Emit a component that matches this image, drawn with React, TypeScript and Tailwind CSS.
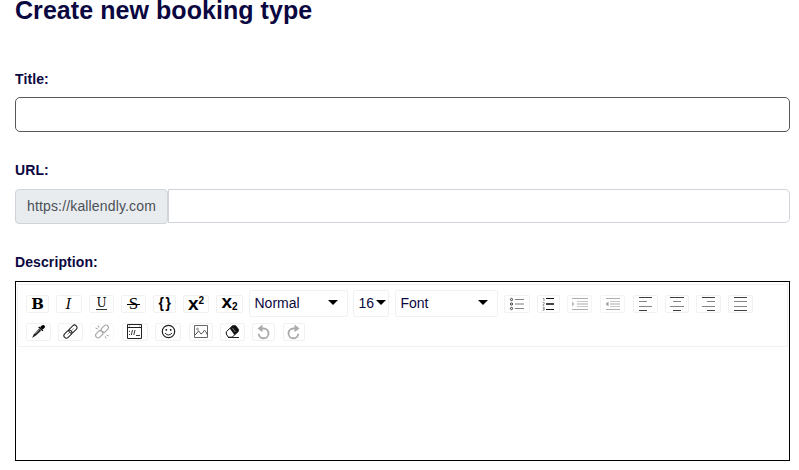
import type { ReactNode } from "react";

type ToolProps = { className: string; w: number; children: ReactNode };

/* Toolbar button; its drawing uses pixel units measured from the outer corner. */
function Tool({ className, w, children }: ToolProps) {
  return (
    <button className={`h-[18px] shrink-0 rounded-[2px] border border-[#f1f1f1] bg-white ${className}`}>
      <svg
        width={w}
        height={18}
        viewBox={`0 0 ${w} 18`}
        className="-m-px block max-w-none overflow-visible"
        fill="none"
        stroke="none"
      >
        {children}
      </svg>
    </button>
  );
}

function Glyph({ className, children }: { className: string; children: ReactNode }) {
  return (
    <button
      className={`flex h-[18px] shrink-0 items-center justify-center rounded-[2px] border border-[#f1f1f1] bg-white leading-none text-black ${className}`}
    >
      {children}
    </button>
  );
}

function Select({ className, label, caret }: { className: string; label: string; caret: string }) {
  return (
    <button
      className={`flex h-[27px] shrink-0 items-center justify-between rounded-[2px] border border-[#f1f1f1] bg-white pl-[5px] text-[14px] leading-[20px] text-[#0b0740] ${className}`}
    >
      <span className="-ml-[0.5px] -mt-px">{label}</span>
      <span className={`-mt-[3px] h-0 w-0 border-x-[5px] border-t-[5px] border-x-transparent border-t-black ${caret}`} />
    </button>
  );
}

type Bar = [x: number, y: number, w: number, h: number, fill: string];

function Bars({ bars }: { bars: Bar[] }) {
  return (
    <g shapeRendering="crispEdges">
      {bars.map(([x, y, w, h, fill], i) => (
        <rect key={i} x={x} y={y} width={w} height={h} fill={fill} />
      ))}
    </g>
  );
}

const dark = "#3f3f3f";
const mid = "#858585";

function Toolbar() {
  return (
    <div className="mx-px mt-[2px] h-[63px] border border-[#f1f1f1] pl-[8px] pt-[5px]">
      <div className="flex h-[27px] items-center">
        <Glyph className="w-[23px] pt-px font-['DejaVu_Serif'] text-[15px] font-bold">B</Glyph>
        <Glyph className="ml-[7px] w-[26px] pr-[1px] font-['DejaVu_Serif'] text-[14px] italic">I</Glyph>
        <Glyph className="ml-[7px] w-[25px] font-['DejaVu_Serif'] text-[12px]">
          <span className="border-b border-[#333] leading-[11px]">U</span>
        </Glyph>
        <Glyph className="ml-[7px] w-[25px] font-['Liberation_Serif'] text-[17px]">
          <span className="bg-[linear-gradient(black,black)] bg-[length:100%_1px] bg-[position:0_55%] bg-no-repeat px-[2px]">S</span>
        </Glyph>
        <Glyph className="ml-[7px] w-[23px] pb-[2px] pl-[2px] font-['Liberation_Sans'] text-[14px] font-bold tracking-[1.5px] text-[#666]">{"{}"}</Glyph>
        <Glyph className="ml-[7px] w-[26px] font-['Liberation_Sans'] font-bold">
          <span className="text-[19px] leading-[16px]">x</span>
          <span className="pb-[6px] text-[10px]">2</span>
        </Glyph>
        <Glyph className="ml-[7px] w-[27px] font-['Liberation_Sans'] font-bold">
          <span className="pb-[4px] text-[19px] leading-[16px]">x</span>
          <span className="pt-[6px] text-[10px]">2</span>
        </Glyph>
        <Select className="ml-[6px] w-[99px]" label="Normal" caret="mr-[9px]" />
        <Select className="ml-[5px] w-[36px]" label="16" caret="mr-[2px]" />
        <Select className="ml-[6px] w-[103px]" label="Font" caret="mr-[9px]" />
        <Tool className="ml-[6px] w-[26px]" w={26}>
          <g stroke="#333" strokeWidth="1">
            <circle cx="7.5" cy="4.5" r="1.1" />
            <circle cx="7.5" cy="9" r="1.1" />
            <circle cx="7.5" cy="13.5" r="1.1" />
          </g>
          <Bars bars={[[11, 4, 9, 1, mid], [11, 8, 9, 2, "#bdbdbd"], [11, 13, 9, 1, mid]]} />
        </Tool>
        <Tool className="ml-[7px] w-[23px]" w={23}>
          <path d="M6 3.5h1v2.5M5.7 7.5h1.5v1.2l-1.4 1.5h1.6M5.7 12.2h1.5v3H5.7M6 13.6h1" stroke="#666" strokeWidth=".7" />
          <Bars bars={[[9, 3, 8, 1, "#111"], [9, 8, 8, 2, "#444"], [9, 14, 8, 1, "#111"]]} />
        </Tool>
        <Tool className="ml-[7px] w-[25px] opacity-80" w={25}>
          <path d="M5 6.5v5L7.5 9z" fill="#aaa" />
          <Bars bars={[[5, 3, 16, 1, "#999"], [10, 6, 11, 1, "#bbb"], [10, 8, 11, 2, "#ccc"], [10, 11, 11, 1, "#bbb"], [5, 14, 16, 1, "#999"]]} />
        </Tool>
        <Tool className="ml-[8px] w-[25px] opacity-80" w={25}>
          <path d="M8.5 6.5v5L5.5 9z" fill="#888" />
          <Bars bars={[[6, 3, 14, 1, "#999"], [10, 6, 10, 1, "#bbb"], [10, 8, 10, 2, "#ccc"], [10, 11, 10, 1, "#bbb"], [6, 14, 14, 1, "#999"]]} />
        </Tool>
        <Tool className="ml-[8px] w-[25px]" w={25}>
          <Bars bars={[[6, 2, 13, 1, dark], [6, 6, 8, 1, mid], [6, 11, 13, 1, mid], [6, 15, 8, 1, dark]]} />
        </Tool>
        <Tool className="ml-[7px] w-[24px]" w={24}>
          <Bars bars={[[5, 2, 14, 1, dark], [8, 6, 8, 1, mid], [5, 11, 14, 1, mid], [8, 15, 8, 1, dark]]} />
        </Tool>
        <Tool className="ml-[7px] w-[25px]" w={25}>
          <Bars bars={[[6, 2, 13, 1, dark], [11, 6, 8, 1, mid], [6, 11, 13, 1, mid], [11, 15, 8, 1, dark]]} />
        </Tool>
        <Tool className="ml-[7px] w-[25px]" w={25}>
          <Bars bars={[[6, 2, 13, 1, dark], [6, 6, 13, 1, mid], [6, 11, 13, 1, mid], [6, 15, 13, 1, dark]]} />
        </Tool>
      </div>
      <div className="mt-[6px] flex h-[18px] items-center">
        <Tool className="w-[25px]" w={25}>
          <path d="M15.5 2.8q2-1.4 3.2 0 .8 1.5-.6 2.5l-1.7 1.2-2.4-2.2z" fill="#000" />
          <path d="M12.7 4l4.2 3.8" stroke="#000" strokeWidth="1.3" />
          <path d="M13 5.8l2.1 2-5.2 4.7-3.9 2.6 1.9-3.9z" fill="#222" />
          <path d="M13 7.2l-3.6 3.5" stroke="#aaa" strokeWidth=".8" />
        </Tool>
        <Tool className="ml-[7px] w-[25px]" w={25}>
          <g stroke="#222" strokeWidth="1" transform="rotate(-45 12.5 8.5)">
            <rect x="4.2" y="6" width="9.3" height="5" rx="2.5" />
            <rect x="11.3" y="6" width="9.3" height="5" rx="2.5" />
            <path d="M8 8.5h3M14 8.5h3" stroke="#777" strokeWidth=".7" />
          </g>
        </Tool>
        <Tool className="ml-[7px] w-[24px] opacity-40" w={24}>
          <g stroke="#222" strokeWidth="1.1" transform="rotate(-45 12 8.5)">
            <path d="M11 6H6.5a2.5 2.5 0 0 0 0 5H11l1-2.5zM13 6h4.5a2.5 2.5 0 0 1 0 5H13l-1-2.5z" />
          </g>
          <path d="M5.5 5l2.3 1M8 2.5l1 2.2M18.8 13l-2.3-1M16.2 15.5l-1-2.2" stroke="#222" />
        </Tool>
        <Tool className="ml-[8px] w-[26px]" w={26}>
          <path d="M5.5 1.5h14v14h-14zM5.5 4.5h14" stroke="#222" />
          <path d="M7 3h.7M17.5 3h.7M7.5 8v1M7.5 11v1M10.5 7L9.3 12M13 7l-1.2 5M14 12.5h4" stroke="#222" strokeWidth=".9" />
        </Tool>
        <Tool className="ml-[7px] w-[26px]" w={26}>
          <circle cx="13.5" cy="8.5" r="6.2" stroke="#222" strokeWidth="1.2" />
          <circle cx="11.3" cy="6.8" r=".9" fill="#000" />
          <circle cx="15.7" cy="6.8" r=".9" fill="#000" />
          <path d="M10 10q3.5 4 7 0" stroke="#222" />
        </Tool>
        <Tool className="ml-[8px] w-[24px]" w={24}>
          <path d="M5.5 2.5h13v12h-13z" stroke="#666" />
          <path d="M6 12l2-2 1.5-2.3L12 11l1-.5 2.5-3.3L17 9l1.5 3" stroke="#444" strokeWidth=".9" />
          <circle cx="8.5" cy="6" r=".9" stroke="#666" strokeWidth=".7" />
        </Tool>
        <Tool className="ml-[7px] w-[25px]" w={25}>
          <path d="M12.5 2.8h3.2l2.6 3.4v2.3l-6.2 5.7H8.3L6.3 11V8.8z" fill="#fff" stroke="#111" />
          <path d="M12.5 2.8h3.2l2.6 3.4v2.3l-3.8 3.5-4.6-6.3z" fill="#111" />
          <path d="M12.5 5l3 4" stroke="#999" strokeWidth=".8" />
          <path d="M8 14.5h11" stroke="#222" />
        </Tool>
        <Tool className="ml-[7px] w-[23px]" w={23}>
          <path d="M9 5.5h2.7a4.9 4.9 0 1 1-5 5.2" stroke="#aaa" strokeWidth="1.9" />
          <path d="M10.5 1.6v7.6L5.5 5.4z" fill="#aaa" />
        </Tool>
        <Tool className="ml-[8px] w-[22px]" w={22}>
          <path d="M13 5.5h-2.7a4.9 4.9 0 1 0 5 5.2" stroke="#aaa" strokeWidth="1.9" />
          <path d="M11.5 1.6v7.6l5-3.8z" fill="#aaa" />
        </Tool>
      </div>
    </div>
  );
}

const label = "block h-[20px] text-[14px] font-bold leading-[20px] tracking-[0.1px] text-[#0b0740]";

export default function App() {
  return (
    <main className="h-[470px] overflow-hidden bg-white pl-[15px] pr-[9px] font-['Liberation_Sans',sans-serif]">
      <h1 className="h-[25px] whitespace-nowrap text-[25px] font-bold leading-[20px] tracking-[0.06px] text-[#0b0740]">
        Create new booking type
      </h1>
      <label className={`mt-[44px] ${label}`}>Title:</label>
      <input className="mt-[8px] block h-[35px] w-full rounded-[5px] border border-[#58585c] bg-white px-3 outline-none" />
      <label className={`mt-[28px] ${label}`}>URL:</label>
      <div className="mt-[9px] flex h-[35px] items-start">
        <span className="flex h-[35px] w-[153px] shrink-0 items-center justify-center rounded-[4px] border border-[#ced4da] bg-[#e9ecef] text-[14px] tracking-[0.15px] text-[#495057]">
          https://kallendly.com
        </span>
        <input className="h-[34px] min-w-0 flex-1 rounded-r-[5px] border border-[#ced4da] bg-white px-3 outline-none" />
      </div>
      <label className={`mt-[28px] ${label}`}>Description:</label>
      <section className="mt-[9px] h-[180px] border border-black">
        <Toolbar />
      </section>
    </main>
  );
}
